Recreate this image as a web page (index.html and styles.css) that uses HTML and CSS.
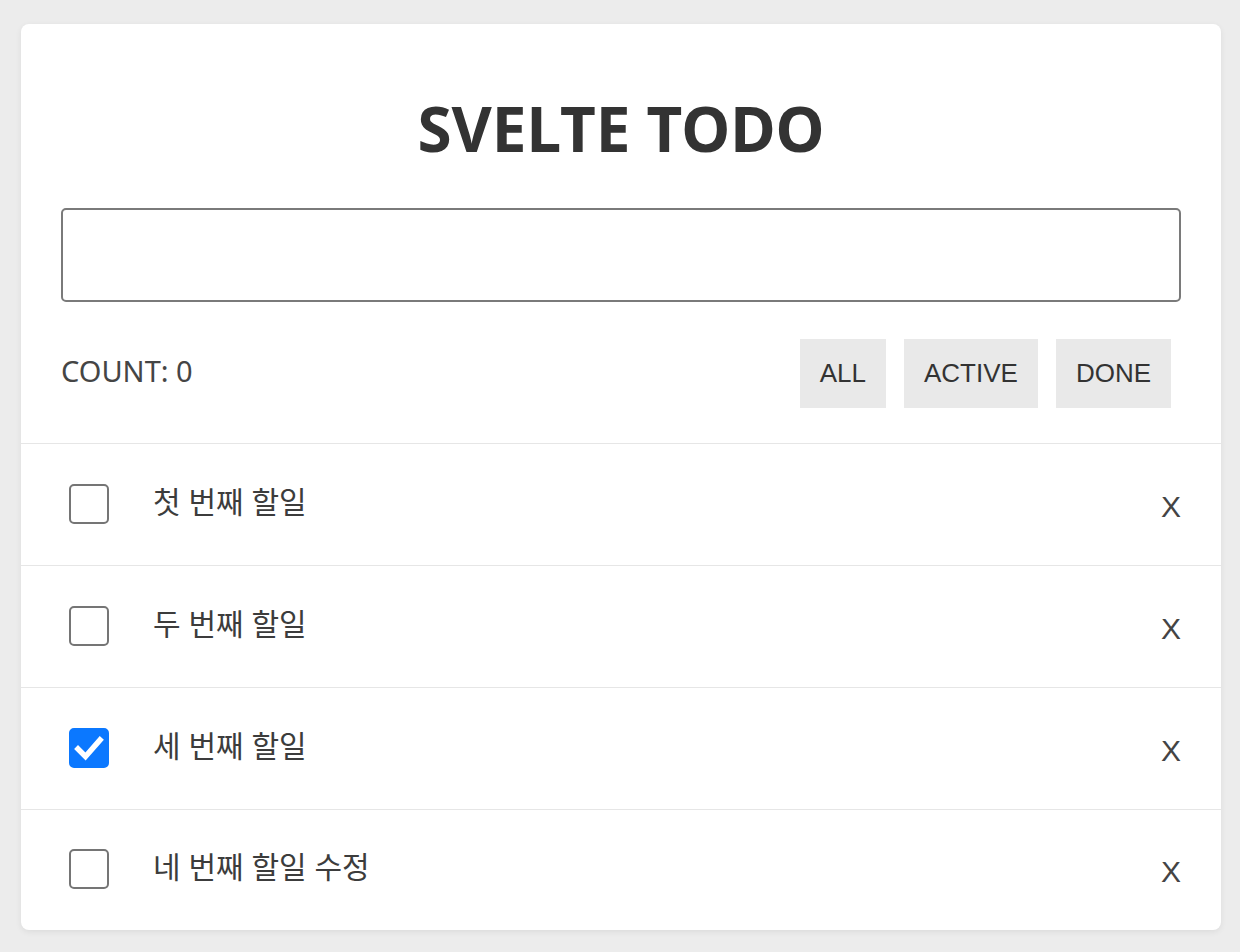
FILE: index.html
```html
<!DOCTYPE html>
<html lang="ko">
<head>
<meta charset="utf-8">
<title>Svelte Todo</title>
<link rel="stylesheet" href="styles.css">
</head>
<body>
<main class="card">
  <header class="head">
    <h1 class="title">SVELTE TODO</h1>
    <input class="new-todo" type="text" aria-label="new todo">
    <div class="filters">
      <span class="count">COUNT: 0</span>
      <div class="btns">
        <button class="btn">ALL</button>
        <button class="btn">ACTIVE</button>
        <button class="btn">DONE</button>
      </div>
    </div>
  </header>
  <ul class="list">
    <li class="item">
      <span class="box"></span>
      <span class="text">첫 번째 할일</span>
      <button class="del">X</button>
    </li>
    <li class="item">
      <span class="box"></span>
      <span class="text">두 번째 할일</span>
      <button class="del">X</button>
    </li>
    <li class="item">
      <span class="box checked"><svg viewBox="0 0 40 40" width="40" height="40"><path d="M9 21 L16.5 28.5 L31 12" fill="none" stroke="#fff" stroke-width="5.5" stroke-linecap="square" stroke-linejoin="miter"/></svg></span>
      <span class="text">세 번째 할일</span>
      <button class="del">X</button>
    </li>
    <li class="item">
      <span class="box"></span>
      <span class="text">네 번째 할일 수정</span>
      <button class="del">X</button>
    </li>
  </ul>
</main>
</body>
</html>
```

FILE: styles.css
```css
* { box-sizing: border-box; }
html, body { margin: 0; }
body {
  background: #ececec;
  padding: 24px 19px 0 21px;
  font-family: "Noto Sans", "Noto Sans CJK KR", sans-serif;
  color: #444;
  height: 952px;
  overflow: hidden;
}
.card {
  width: 1200px;
  background: #fff;
  border-radius: 8px;
  box-shadow: 0 2px 6px rgba(0,0,0,0.07);
  overflow: hidden;
}
.head {
  padding: 64px 40px 35px;
  display: flex;
  flex-direction: column;
}
.title {
  margin: 0;
  font-size: 62px;
  line-height: 80px;
  height: 80px;
  font-weight: 700;
  text-align: center;
  color: #333;
}
.new-todo {
  margin-top: 40px;
  height: 94px;
  width: 100%;
  border: 2px solid #7a7a7a;
  border-radius: 5px;
  font-size: 28px;
  padding: 0 16px;
  outline: none;
}
.filters {
  margin-top: 37px;
  height: 69px;
  display: flex;
  align-items: center;
  justify-content: space-between;
}
.count {
  font-size: 29px;
  color: #454545;
  margin-top: -6px;
}
.btns {
  display: flex;
  gap: 18px;
  margin-right: 10px;
}
.btn {
  height: 69px;
  padding: 0 20px;
  border: none;
  background: #e9e9e9;
  font-family: "Liberation Sans", Arial, sans-serif;
  font-size: 26px;
  color: #333;
}
.list {
  list-style: none;
  margin: 0;
  padding: 0;
}
.item {
  height: 122px;
  border-top: 1px solid #e6e6e6;
  display: flex;
  align-items: center;
  padding: 0 40px 0 48px;
}
.item:last-child { height: 121px; }
.box {
  width: 40px;
  height: 40px;
  border: 2px solid #757575;
  border-radius: 5px;
  flex: none;
  margin-top: -2px;
  display: flex;
}
.box.checked {
  background: #0b78ff;
  border-color: #0b78ff;
}
.box.checked svg { margin: -2px; }
.text {
  margin-left: 44px;
  font-size: 30px;
  line-height: 40px;
  color: #3c3c3c;
  flex: 1;
  margin-top: -6px;
}
.del {
  border: none;
  background: none;
  padding: 0;
  font-family: "Liberation Sans", Arial, sans-serif;
  font-size: 30px;
  color: #444;
  margin-top: 4px;
}
```
